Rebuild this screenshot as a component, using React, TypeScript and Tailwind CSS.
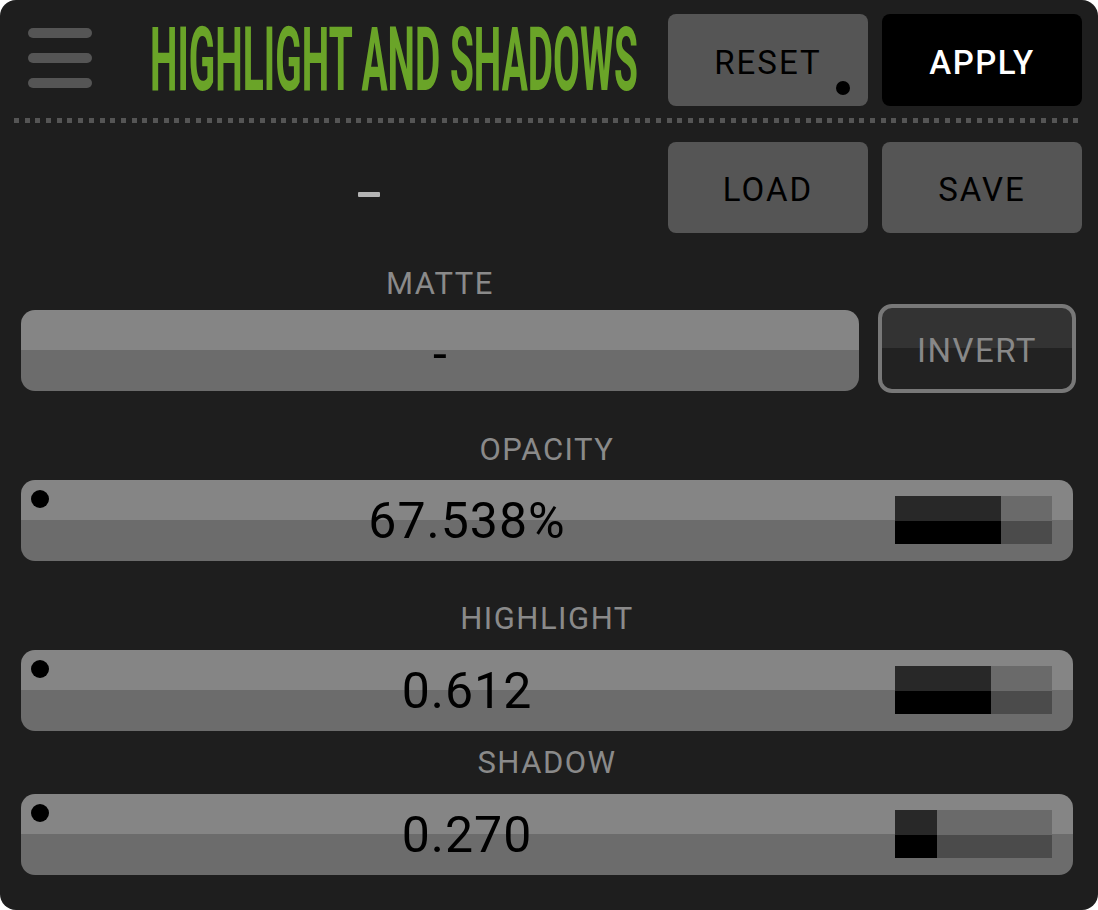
import React from 'react';

const FONT = { fontFamily: 'Roboto, "Liberation Sans", sans-serif' };

function HamburgerIcon() {
  return (
    <div className="mt-[14px] ml-[28px] flex w-[64px] flex-col gap-[15px]">
      <span className="block h-[10px] rounded-full bg-[#555555]" />
      <span className="block h-[10px] rounded-full bg-[#555555]" />
      <span className="block h-[10px] rounded-full bg-[#555555]" />
    </div>
  );
}

function MiniBar({ value }: { value: number }) {
  const pct = `${value * 100}%`;
  return (
    <div className="flex h-[48px] w-[157px] shrink-0 flex-col">
      <div className="flex h-[25px] bg-[#6a6a6a]">
        <div className="h-full bg-[#282828]" style={{ width: pct }} />
      </div>
      <div className="flex h-[23px] bg-[#4b4b4b]">
        <div className="h-full bg-black" style={{ width: pct }} />
      </div>
    </div>
  );
}

function Label({ children, className }: { children: React.ReactNode; className?: string }) {
  return (
    <div
      className={`text-center text-[31px] leading-none tracking-[1.5px] text-[#8a8a8a] ${className ?? ''}`}
    >
      {children}
    </div>
  );
}

function ValueSlider({ value, fill }: { value: string; fill: number }) {
  return (
    <div className="relative ml-[21px] flex h-[81px] w-[1052px] items-center rounded-[14px] bg-[linear-gradient(to_bottom,#858585_0_40px,#6c6c6c_40px)]">
      <span className="absolute left-[10px] top-[10px] h-[18px] w-[18px] rounded-full bg-black" />
      <div className="flex flex-1 justify-center pl-[18px] text-[50px] leading-none tracking-[1px] text-black">
        {value}
      </div>
      <div className="mr-[21px] mt-[-2px]">
        <MiniBar value={fill} />
      </div>
    </div>
  );
}

export default function App() {
  return (
    <div className="bg-white" style={FONT}>
      <div className="flex h-[910px] w-[1098px] flex-col overflow-hidden rounded-2xl bg-[#1e1e1e]">
        {/* header */}
        <div className="mt-[14px] flex h-[92px] items-start">
          <HamburgerIcon />
          <div className="ml-[58px] mt-[1px] h-[88px] w-[500px]">
            <span className="inline-block origin-left scale-x-[0.437] whitespace-nowrap text-[89px] font-bold leading-none text-[#6aa428]">
              HIGHLIGHT AND SHADOWS
            </span>
          </div>
          <div className="ml-auto mr-[16px] flex gap-[14px]">
            <button className="relative flex h-[92px] w-[200px] items-center justify-center rounded-[8px] bg-[#555555] pt-[4px] text-[33px] leading-none tracking-[2px] text-black">
              RESET
              <span className="absolute left-[168px] top-[67px] h-[14px] w-[14px] rounded-full bg-black" />
            </button>
            <button className="flex h-[92px] w-[200px] items-center justify-center rounded-[8px] bg-black pt-[4px] text-[33px] font-medium leading-none tracking-[1.5px] text-white">
              APPLY
            </button>
          </div>
        </div>

        {/* dotted divider */}
        <div className="ml-[14px] mt-[12px] h-[5px] w-[1070px] bg-[repeating-linear-gradient(to_right,#555555_0_5px,transparent_5px_10.7px)]" />

        {/* preset row */}
        <div className="mt-[19px] flex h-[91px] items-center">
          <div className="flex flex-1 justify-center pl-[70px] pt-[14px]">
            <span className="block h-[5px] w-[22px] rounded-[1px] bg-[#b4b4b4]" />
          </div>
          <div className="mr-[16px] flex gap-[14px]">
            <button className="flex h-[91px] w-[200px] items-center justify-center rounded-[8px] bg-[#555555] pt-[4px] text-[33px] leading-none tracking-[2px] text-black">
              LOAD
            </button>
            <button className="flex h-[91px] w-[200px] items-center justify-center rounded-[8px] bg-[#555555] pt-[4px] text-[33px] leading-none tracking-[2px] text-black">
              SAVE
            </button>
          </div>
        </div>

        {/* matte */}
        <Label className="mt-[35px] w-[880px]">MATTE</Label>
        <div className="mt-[5px] flex items-start">
          <div className="ml-[21px] mt-[6px] flex h-[81px] w-[838px] items-center justify-center rounded-[14px] bg-[linear-gradient(to_bottom,#858585_0_40px,#6c6c6c_40px)] pt-[6px] text-[50px] leading-none text-black">
            -
          </div>
          <button className="ml-[19px] flex h-[89px] w-[198px] items-center justify-center rounded-[14px] border-[4px] border-[#787878] bg-[linear-gradient(to_bottom,#333333_0_40px,#222222_40px)] pt-[3px] text-[33px] leading-none tracking-[1.5px] text-[#888888]">
            INVERT
          </button>
        </div>

        {/* opacity */}
        <Label className="mt-[41px] ml-[21px] w-[1052px]">OPACITY</Label>
        <div className="mt-[15px]">
          <ValueSlider value="67.538%" fill={0.67538} />
        </div>

        {/* highlight */}
        <Label className="mt-[42px] ml-[21px] w-[1052px]">HIGHLIGHT</Label>
        <div className="mt-[16px]">
          <ValueSlider value="0.612" fill={0.612} />
        </div>

        {/* shadow */}
        <Label className="mt-[16px] ml-[21px] w-[1052px]">SHADOW</Label>
        <div className="mt-[16px]">
          <ValueSlider value="0.270" fill={0.27} />
        </div>
      </div>
    </div>
  );
}
